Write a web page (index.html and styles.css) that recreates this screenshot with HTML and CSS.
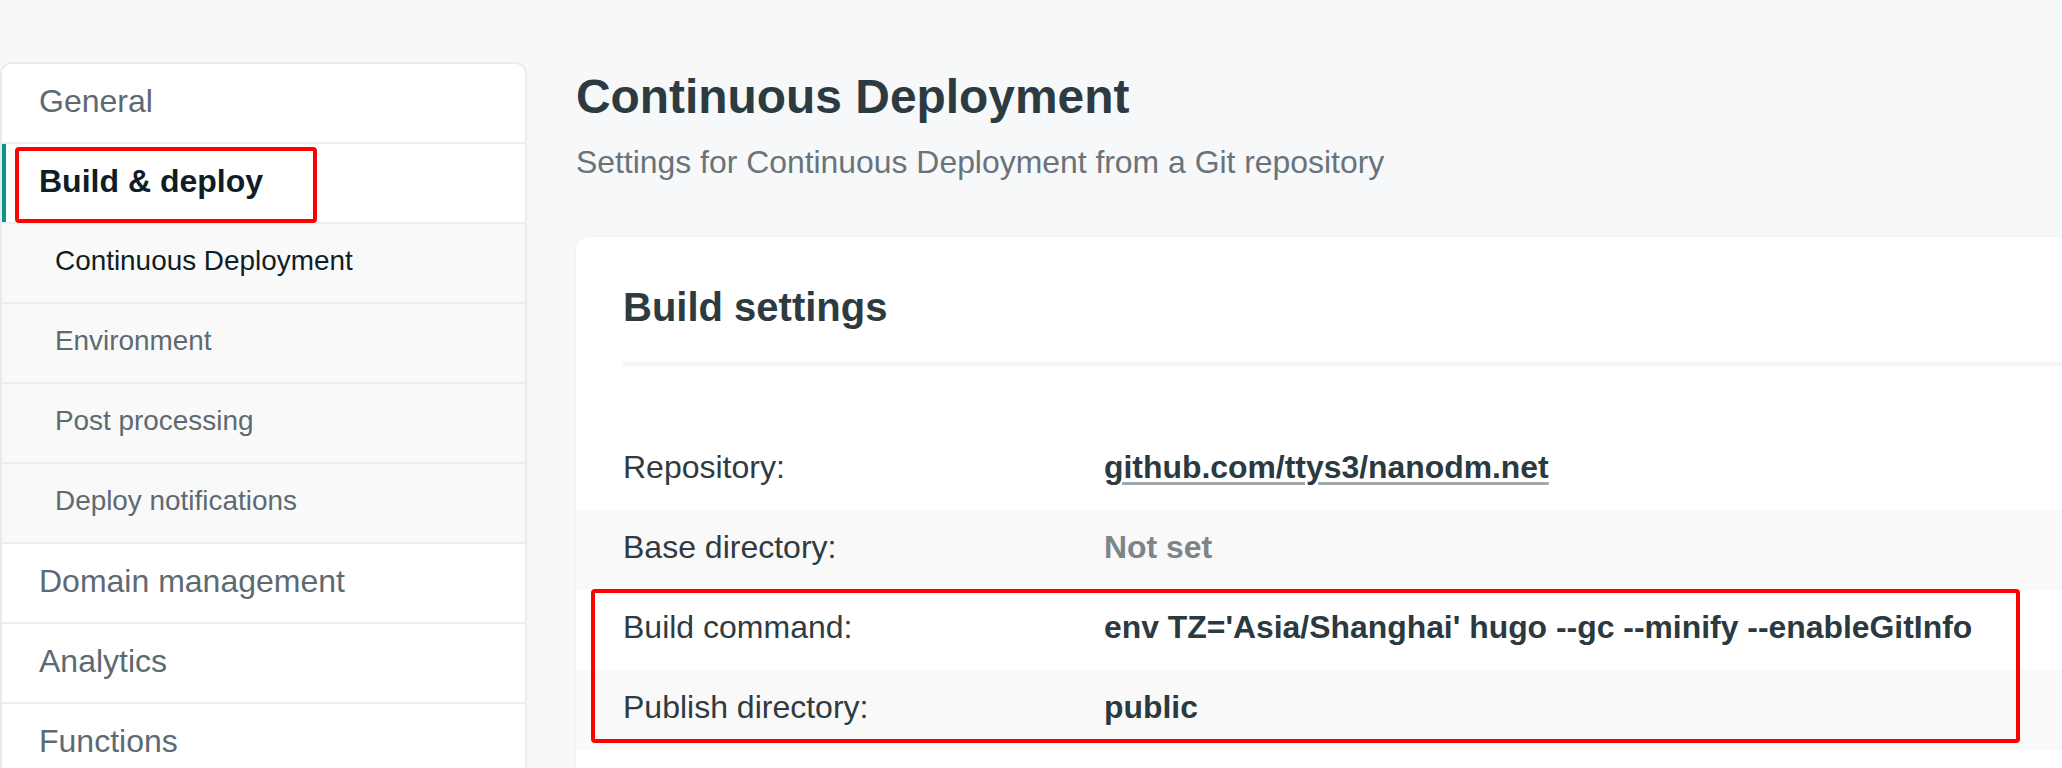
FILE: index.html
```html
<!DOCTYPE html>
<html lang="en">
<head>
<meta charset="utf-8">
<title>Continuous Deployment</title>
<link rel="stylesheet" href="styles.css">
</head>
<body>
<div class="page">
  <nav class="sidebar">
    <a class="nav-item">General</a>
    <a class="nav-item active">Build &amp; deploy</a>
    <a class="nav-sub current">Continuous Deployment</a>
    <a class="nav-sub">Environment</a>
    <a class="nav-sub">Post processing</a>
    <a class="nav-sub">Deploy notifications</a>
    <a class="nav-item">Domain management</a>
    <a class="nav-item">Analytics</a>
    <a class="nav-item">Functions</a>
  </nav>
  <main class="main">
    <h1 class="title">Continuous Deployment</h1>
    <p class="subtitle">Settings for Continuous Deployment from a Git repository</p>
    <section class="card">
      <h2 class="card-title">Build settings</h2>
      <dl class="settings">
        <div class="row">
          <dt class="label">Repository:</dt>
          <dd class="value"><a class="repo-link">github.com/ttys3/nanodm.net</a></dd>
        </div>
        <div class="row alt">
          <dt class="label">Base directory:</dt>
          <dd class="value muted">Not set</dd>
        </div>
        <div class="row">
          <dt class="label">Build command:</dt>
          <dd class="value">env TZ='Asia/Shanghai' hugo --gc --minify --enableGitInfo</dd>
        </div>
        <div class="row alt">
          <dt class="label">Publish directory:</dt>
          <dd class="value">public</dd>
        </div>
        <div class="row">
          <dt class="label"></dt>
          <dd class="value"></dd>
        </div>
      </dl>
    </section>
  </main>
</div>
<div class="annot annot-nav"></div>
<div class="annot annot-build"></div>
</body>
</html>
```

FILE: styles.css
```css
html, body {
  margin: 0;
  padding: 0;
}

body {
  background: #f6f8f9;
  font-family: "Liberation Sans", Arial, Helvetica, sans-serif;
  color: #2d3b41;
  width: 2062px;
  height: 768px;
  overflow: hidden;
  position: relative;
}

.page {
  display: flex;
  align-items: flex-start;
  gap: 49px;
}

/* Sidebar */
.sidebar {
  flex: 0 0 527px;
  box-sizing: border-box;
  margin-top: 62px;
  background: #ffffff;
  border: 2px solid #e9ebec;
  border-radius: 12px 12px 0 0;
  overflow: hidden;
  display: flex;
  flex-direction: column;
}

.nav-item,
.nav-sub {
  display: flex;
  align-items: center;
  height: 80px;
  flex: 0 0 auto;
  box-sizing: border-box;
  padding-bottom: 4px;
  border-bottom: 2px solid #ebedee;
  color: #5d6a72;
  white-space: nowrap;
}

.nav-item {
  padding-left: 37px;
  font-size: 32px;
  background: #ffffff;
}

.nav-item.active {
  font-weight: bold;
  color: #0f1e26;
  box-shadow: inset 4px 0 0 #0d9488;
}

.nav-sub {
  padding-left: 53px;
  font-size: 27.9px;
  background: #f9f9f9;
}

.nav-sub.current {
  color: #0f1e26;
}

/* Main */
.main {
  flex: 1;
  min-width: 0;
  padding-top: 68px;
}

.title {
  margin: 0;
  font-size: 47.9px;
  line-height: 1.2;
  font-weight: bold;
  color: #2d3b41;
}

.subtitle {
  margin: 14px 0 0;
  font-size: 31.9px;
  line-height: 1.5;
  color: #697379;
}

.card {
  margin-top: 50px;
  margin-right: -40px;
  background: #ffffff;
  border-radius: 14px 0 0 0;
  box-shadow: 0 0 0 1px #f1f3f4;
  padding-top: 46px;
}

.card-title {
  margin: 0 0 0 47px;
  padding-bottom: 31px;
  border-bottom: 4px solid #f3f5f6;
  font-size: 40px;
  line-height: 1.2;
  font-weight: bold;
  color: #2d3b41;
}

.settings {
  margin: 64px 0 0;
  padding: 0;
}

.row {
  display: flex;
  align-items: center;
  height: 80px;
  box-sizing: border-box;
  padding: 0 0 5px 47px;
  font-size: 32px;
  background: #ffffff;
}

.row.alt {
  background: #f9f9f9;
}

.label {
  flex: 0 0 481px;
  margin: 0;
  color: #2f3b41;
}

.value {
  margin: 0;
  font-weight: bold;
  color: #2b3940;
  white-space: nowrap;
  font-size: 31.9px;
}

.value.muted {
  color: #7b858a;
}

.repo-link {
  color: #2b3940;
  text-decoration: underline;
  text-decoration-color: #a2a8ac;
  text-decoration-thickness: 3px;
  text-underline-offset: 4px;
}

/* Annotation boxes drawn over the screenshot */
.annot {
  position: absolute;
  box-sizing: border-box;
  border: 4px solid #ff0000;
  border-radius: 4px;
  pointer-events: none;
}

.annot-nav {
  left: 15px;
  top: 147px;
  width: 302px;
  height: 76px;
}

.annot-build {
  left: 591px;
  top: 589px;
  width: 1429px;
  height: 154px;
}
```
